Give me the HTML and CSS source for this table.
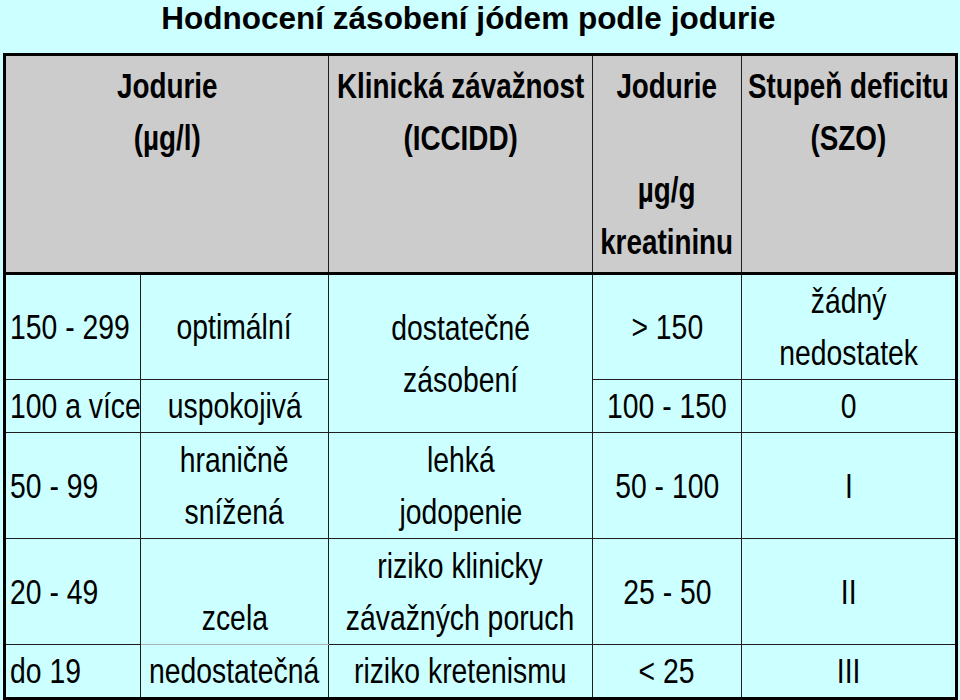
FILE: index.html
```html
<!DOCTYPE html>
<html lang="cs">
<head>
<meta charset="utf-8">
<title>Hodnocení zásobení jódem podle jodurie</title>
<link rel="stylesheet" href="styles.css">
</head>
<body>
<h1 class="title">Hodnocení zásobení jódem podle jodurie</h1>
<table class="grid">
  <colgroup>
    <col class="c1"><col class="c2"><col class="c3"><col class="c4"><col class="c5">
  </colgroup>
  <thead>
    <tr class="head">
      <th colspan="2"><span class="t">Jodurie<br>(µg/l)</span></th>
      <th><span class="t">Klinická závažnost<br>(ICCIDD)</span></th>
      <th><span class="t">Jodurie<br><br>µg/g<br>kreatininu</span></th>
      <th><span class="t">Stupeň deficitu<br>(SZO)</span></th>
    </tr>
  </thead>
  <tbody>
    <tr class="r-tall">
      <td class="left"><span class="t">150 - 299</span></td>
      <td><span class="t">optimální</span></td>
      <td rowspan="2"><span class="t">dostatečné<br>zásobení</span></td>
      <td><span class="t">&gt; 150</span></td>
      <td><span class="t">žádný<br>nedostatek</span></td>
    </tr>
    <tr class="r-short">
      <td class="left"><span class="t">100 a více</span></td>
      <td><span class="t">uspokojivá</span></td>
      <td><span class="t">100 - 150</span></td>
      <td><span class="t">0</span></td>
    </tr>
    <tr class="r-tall">
      <td class="left"><span class="t">50 - 99</span></td>
      <td><span class="t">hraničně<br>snížená</span></td>
      <td><span class="t">lehká<br>jodopenie</span></td>
      <td><span class="t">50 - 100</span></td>
      <td><span class="t">I</span></td>
    </tr>
    <tr class="r-tall">
      <td class="left"><span class="t">20 - 49</span></td>
      <td class="bottom soft"><span class="t">zcela</span></td>
      <td><span class="t">riziko klinicky<br>závažných poruch</span></td>
      <td><span class="t">25 - 50</span></td>
      <td><span class="t">II</span></td>
    </tr>
    <tr class="r-last">
      <td class="left"><span class="t">do 19</span></td>
      <td class="soft-top"><span class="t">nedostatečná</span></td>
      <td><span class="t">riziko kretenismu</span></td>
      <td><span class="t">&lt; 25</span></td>
      <td><span class="t">III</span></td>
    </tr>
  </tbody>
</table>
</body>
</html>
```
FILE: styles.css
```css
html, body {
  margin: 0;
  padding: 0;
  background: #ccffff;
}

body {
  width: 960px;
  height: 700px;
  overflow: hidden;
  color: #000;
}

.title {
  margin: 0;
  height: 53px;
  padding-right: 23px;
  font-family: "Liberation Sans", Arial, sans-serif;
  font-weight: bold;
  font-size: 31.5px;
  line-height: 36px;
  text-align: center;
  box-sizing: border-box;
}

.grid {
  margin-left: 3px;
  width: 955px;
  border-collapse: collapse;
  table-layout: fixed;
  border: 3px solid #000;
  font-family: "Liberation Sans", Arial, sans-serif;
  font-size: 35px;
  line-height: 52px;
}

.c1 { width: 136px; }
.c2 { width: 188px; }
.c3 { width: 264px; }
.c4 { width: 149px; }
.c5 { width: 215px; }

.grid th,
.grid td {
  border: 1.5px solid #1e1e1e;
  padding: 0;
  text-align: center;
  white-space: nowrap;
}

.t {
  display: inline-block;
  margin: 0 -60px;
  transform: scaleX(0.81);
}

.grid th .t {
  transform: scaleX(0.795);
}

.grid th {
  background: #cccccc;
  font-weight: bold;
  vertical-align: top;
  padding-top: 4px;
  border-bottom: 3px solid #000;
}

.head { height: 219px; }

.grid td {
  background: #ccffff;
  vertical-align: middle;
}

.r-tall { height: 106px; }
.r-short { height: 51px; }
.r-last { height: 49px; }

.grid td.left {
  text-align: left;
  padding-left: 4px;
}

.grid td.left .t {
  margin: 0;
  transform-origin: left center;
}

.grid td.bottom {
  vertical-align: bottom;
}

.grid td.soft {
  border-bottom: 1px solid #a8b4b4;
}

.grid td.soft-top {
  border-top: 1px solid #a8b4b4;
}
```
